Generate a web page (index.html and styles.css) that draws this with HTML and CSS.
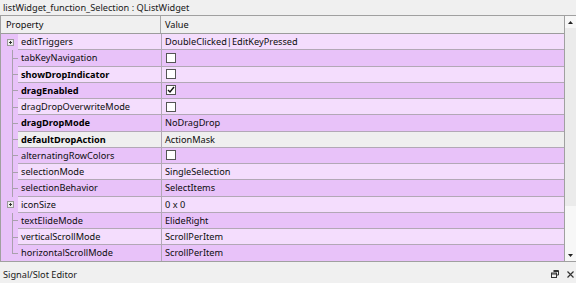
FILE: index.html
```html
<!DOCTYPE html>
<html>
<head>
    <title>Property Editor</title>
    <link rel="stylesheet" href="styles.css">
</head>
<body>
    <div class="titlebar">listWidget_function_Selection : QListWidget</div>
    <div class="view">
        <div class="table">
            <div class="header">
                <div class="hcell name">Property</div>
                <div class="hcell value">Value</div>
            </div>
            <div class="rows">
                <div class="row light">
                    <div class="branch"><svg class="plus" width="7" height="7" viewBox="0 0 7 7"><rect x="0.5" y="0.5" width="6" height="6" fill="#eee" stroke="#9a9a9a"/><path d="M2 3.5h3M3.5 2v3" stroke="#333"/></svg></div>
                    <div class="cell name">editTriggers</div>
                    <div class="cell value">DoubleClicked|EditKeyPressed</div>
                </div>
                <div class="row dark">
                    <div class="branch leaf"></div>
                    <div class="cell name">tabKeyNavigation</div>
                    <div class="cell value"><span class="check"></span></div>
                </div>
                <div class="row light">
                    <div class="branch leaf"></div>
                    <div class="cell name bold">showDropIndicator</div>
                    <div class="cell value"><span class="check"></span></div>
                </div>
                <div class="row dark">
                    <div class="branch leaf"></div>
                    <div class="cell name bold">dragEnabled</div>
                    <div class="cell value"><span class="check"><svg width="8" height="8" viewBox="0 0 8 8"><path d="M1 4l2 2 4-5" fill="none" stroke="#111" stroke-width="1.4"/></svg></span></div>
                </div>
                <div class="row light">
                    <div class="branch leaf"></div>
                    <div class="cell name">dragDropOverwriteMode</div>
                    <div class="cell value"><span class="check"></span></div>
                </div>
                <div class="row dark">
                    <div class="branch leaf"></div>
                    <div class="cell name bold">dragDropMode</div>
                    <div class="cell value">NoDragDrop</div>
                </div>
                <div class="row current">
                    <div class="branch leaf"></div>
                    <div class="cell name bold">defaultDropAction</div>
                    <div class="cell value">ActionMask</div>
                </div>
                <div class="row dark">
                    <div class="branch leaf"></div>
                    <div class="cell name">alternatingRowColors</div>
                    <div class="cell value"><span class="check"></span></div>
                </div>
                <div class="row light">
                    <div class="branch leaf"></div>
                    <div class="cell name">selectionMode</div>
                    <div class="cell value">SingleSelection</div>
                </div>
                <div class="row dark">
                    <div class="branch leaf"></div>
                    <div class="cell name">selectionBehavior</div>
                    <div class="cell value">SelectItems</div>
                </div>
                <div class="row light">
                    <div class="branch"><svg class="plus" width="7" height="7" viewBox="0 0 7 7"><rect x="0.5" y="0.5" width="6" height="6" fill="#eee" stroke="#9a9a9a"/><path d="M2 3.5h3M3.5 2v3" stroke="#333"/></svg></div>
                    <div class="cell name">iconSize</div>
                    <div class="cell value">0 x 0</div>
                </div>
                <div class="row dark">
                    <div class="branch leaf"></div>
                    <div class="cell name">textElideMode</div>
                    <div class="cell value">ElideRight</div>
                </div>
                <div class="row light">
                    <div class="branch leaf"></div>
                    <div class="cell name">verticalScrollMode</div>
                    <div class="cell value">ScrollPerItem</div>
                </div>
                <div class="row dark">
                    <div class="branch leaf last"></div>
                    <div class="cell name">horizontalScrollMode</div>
                    <div class="cell value">ScrollPerItem</div>
                </div>
            </div>
        </div>
        <div class="scrollbar">
            <div class="arrow"><svg width="5" height="3" viewBox="0 0 5 3"><path d="M0 3h5L2.5 0z" fill="#222"/></svg></div>
            <div class="track"><div class="thumb"></div></div>
            <div class="arrow"><svg width="5" height="3" viewBox="0 0 5 3"><path d="M0 0h5L2.5 3z" fill="#222"/></svg></div>
        </div>
    </div>
    <div class="dock">
        <span>Signal/Slot Editor</span>
        <div class="dock-buttons">
            <svg width="8" height="8" viewBox="0 0 8 8"><path d="M2.5 0.5h5v4.5h-2M2.5 1.5h5" fill="none" stroke="#333"/><rect x="0.5" y="3" width="5" height="4.5" fill="none" stroke="#333"/><path d="M0.5 4h5" stroke="#333"/></svg>
            <svg width="7" height="7" viewBox="0 0 7 7"><path d="M0.5 0.5l6 6M6.5 0.5l-6 6" stroke="#333" stroke-width="1.2"/></svg>
        </div>
    </div>
</body>
</html>
```
FILE: styles.css
```css
body {
    margin: 0;
    width: 576px;
    height: 283px;
    overflow: hidden;
    background: #f0f0f0;
    font-family: "Noto Sans", sans-serif;
    font-size: 9.2px;
    color: #0d0d0d;
}
.titlebar {
    height: 15px;
    line-height: 15px;
    padding-left: 3px;
    color: #1a1a1a;
}
.view {
    display: flex;
    height: 247px;
    box-sizing: border-box;
    border-top: 1px solid #a0a0a0;
    border-bottom: 1px solid #a0a0a0;
}
.table {
    flex: 0 0 565px;
    box-sizing: border-box;
    border-left: 1px solid #a0a0a0;
    border-right: 1px solid #a0a0a0;
    overflow: hidden;
    background: #e8c2f9;
}
.header {
    display: flex;
    height: 18px;
    box-sizing: border-box;
    border-bottom: 1px solid #9c9c9c;
    background: #f0f0f0;
}
.hcell {
    line-height: 17px;
    color: #0d0d0d;
}
.hcell.name {
    width: 160px;
    padding-left: 5px;
    box-sizing: border-box;
    border-right: 1px solid #a8a8a8;
}
.hcell.value {
    padding-left: 4px;
}
.row {
    display: flex;
    height: 16.25px;
}
.branch {
    width: 17px;
    flex: none;
    display: flex;
    align-items: center;
    padding-left: 6px;
    box-sizing: border-box;
    background: #e8c2f9;
}
.branch.leaf {
    background:
        linear-gradient(#a9a0ad, #a9a0ad) no-repeat 11px 0 / 1px 100%,
        linear-gradient(#a9a0ad, #a9a0ad) no-repeat 11px 50% / 6px 1px,
        #e8c2f9;
}
.branch.leaf.last {
    background:
        linear-gradient(#a9a0ad, #a9a0ad) no-repeat 11px 0 / 1px 50%,
        linear-gradient(#a9a0ad, #a9a0ad) no-repeat 11px 50% / 6px 1px,
        #e8c2f9;
}
.cell {
    display: flex;
    align-items: center;
    box-sizing: border-box;
    border-bottom: 1px solid #b2a8b6;
    white-space: nowrap;
}
.cell.name {
    width: 144px;
    flex: none;
    padding-left: 3px;
    border-right: 1px solid #b2a8b6;
}
.cell.value {
    flex: 1;
    padding-left: 3px;
}
.bold {
    font-weight: bold;
    color: #000;
}
.light .cell {
    background: #f4ddfd;
}
.dark .cell {
    background: #e8c2f9;
}
.current .cell {
    background: #efefef;
}
.check {
    width: 8px;
    height: 8px;
    border: 1px solid #555;
    background: #fff;
    display: flex;
    align-items: center;
    justify-content: center;
    margin-left: 1px;
}
.scrollbar {
    flex: 1;
    display: flex;
    flex-direction: column;
    background: #f7f7f7;
}
.arrow {
    height: 12px;
    display: flex;
    align-items: center;
    justify-content: center;
    padding-right: 1px;
}
.track {
    flex: 1;
}
.thumb {
    height: 178px;
    background: #ebebeb;
}
.dock {
    height: 21px;
    display: flex;
    align-items: center;
    padding: 3px 2px 0 3px;
    box-sizing: border-box;
    color: #1a1a1a;
}
.dock span {
    flex: 1;
}
.dock-buttons {
    display: flex;
    align-items: center;
    gap: 8px;
}
```
